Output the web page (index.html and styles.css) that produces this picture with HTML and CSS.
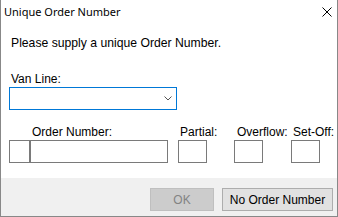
FILE: index.html
```html
<!DOCTYPE html>
<html lang="en">
<head>
    <meta charset="UTF-8">
    <title>Unique Order Number</title>
    <link rel="stylesheet" href="styles.css">
</head>
<body>
    <div class="window">
        <div class="titlebar">
            <span class="title">Unique Order Number</span>
            <svg class="close" width="10" height="10" viewBox="0 0 10 10">
                <path d="M0.5 0.5 L9.5 9.5 M9.5 0.5 L0.5 9.5" stroke="#000" stroke-width="1" fill="none"/>
            </svg>
        </div>

        <div class="content">
            <p class="message">Please supply a unique Order Number.</p>

            <label class="label">Van Line:</label>
            <div class="select">
                <svg class="chevron" width="8" height="5" viewBox="0 0 8 5">
                    <path d="M0.5 0.5 L4 4 L7.5 0.5" stroke="#555" stroke-width="1" fill="none"/>
                </svg>
            </div>

            <div class="fields">
                <div class="field order">
                    <label class="label">Order Number:</label>
                    <div class="pair">
                        <div class="box prefix"></div>
                        <div class="box number"></div>
                    </div>
                </div>
                <div class="field partial">
                    <label class="label">Partial:</label>
                    <div class="box small"></div>
                </div>
                <div class="field overflow">
                    <label class="label">Overflow:</label>
                    <div class="box small"></div>
                </div>
                <div class="field setoff">
                    <label class="label">Set-Off:</label>
                    <div class="box small"></div>
                </div>
            </div>
        </div>

        <div class="footer">
            <button class="btn btn-disabled">OK</button>
            <button class="btn">No Order Number</button>
        </div>
    </div>
</body>
</html>
```

FILE: styles.css
```css
* {
    margin: 0;
    padding: 0;
    box-sizing: border-box;
}

body {
    font-family: 'Liberation Sans', Arial, sans-serif;
    font-size: 12px;
    color: #000;
    background: white;
}

.window {
    width: 338px;
    height: 217px;
    border: 1px solid #888;
    border-top: none;
    display: flex;
    flex-direction: column;
    background: white;
}

.titlebar {
    height: 30px;
    display: flex;
    align-items: flex-start;
    justify-content: space-between;
    padding: 4px 3px 0 3px;
}

.title {
    font-family: 'Noto Sans', sans-serif;
    font-size: 11px;
    line-height: 16px;
}

.close {
    margin-top: 3px;
    margin-right: 2px;
}

.content {
    flex: 1;
    padding: 6px 0 0 8px;
}

.message {
    line-height: 14px;
    padding-left: 2px;
    font-size: 12.2px;
}

.label {
    display: block;
    line-height: 14px;
    padding-left: 2px;
    white-space: nowrap;
}

.content > .label {
    margin-top: 22px;
    margin-bottom: 1px;
}

.select {
    width: 168px;
    height: 23px;
    border: 1px solid #0078d7;
    display: flex;
    align-items: center;
    justify-content: flex-end;
    padding-right: 4px;
}

.fields {
    display: flex;
    margin-top: 15px;
}

.field {
    flex-shrink: 0;
}

.field .label {
    margin-bottom: 1px;
}

.order {
    width: 159px;
}

.order .label {
    padding-left: 23px;
}

.partial,
.overflow,
.setoff {
    width: 29px;
}

.partial {
    margin-left: 10px;
}

.overflow {
    margin-left: 27px;
}

.overflow .label {
    padding-left: 3px;
}

.setoff {
    margin-left: 28px;
}

.pair {
    display: flex;
}

.box {
    height: 23px;
    border: 1px solid #7a7a7a;
    background: white;
}

.prefix {
    width: 21px;
}

.number {
    width: 138px;
}

.small {
    width: 29px;
}

.footer {
    height: 38px;
    background: #f0f0f0;
    display: flex;
    justify-content: flex-end;
    align-items: flex-start;
    gap: 8px;
    padding: 10px 4px 0 0;
}

.btn {
    height: 23px;
    font-family: 'Liberation Sans', Arial, sans-serif;
    font-size: 12px;
    background: #e1e1e1;
    border: 1px solid #adadad;
    color: #000;
    width: 111px;
}

.btn-disabled {
    width: 64px;
    background: #cccccc;
    border-color: #bfbfbf;
    color: #838383;
}
```
